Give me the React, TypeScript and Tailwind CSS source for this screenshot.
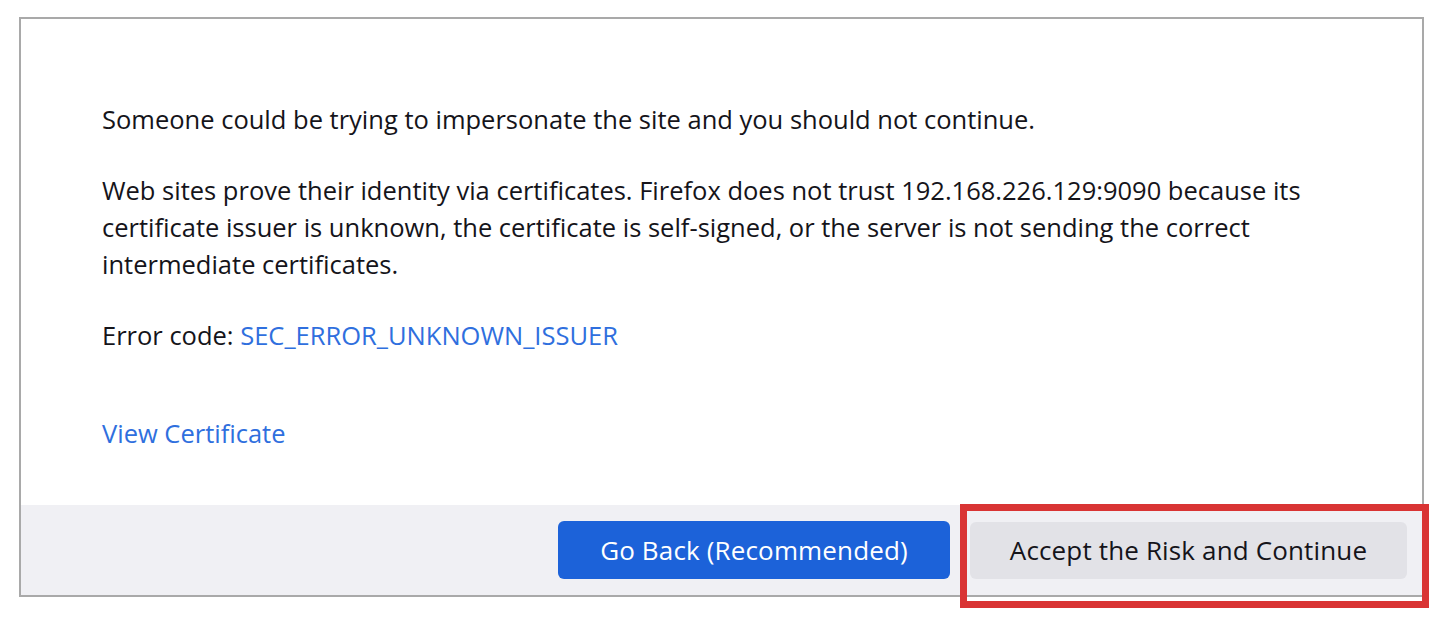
import React from 'react';

const App: React.FC = () => {
  return (
    <div className="w-[1446px] h-[618px] bg-white pt-[17px] pl-[19px] font-['Open_Sans',sans-serif] text-[#15141a]">
      <div className="w-[1405px] h-[580px] border-2 border-[#a9a9a9] flex flex-col">
        <div className="flex-1 pl-[81px] pt-[82px] text-[25.5px] leading-[37px]">
          <p>Someone could be trying to impersonate the site and you should not continue.</p>
          <p className="mt-[34px]">
            Web sites prove their identity via certificates. Firefox does not trust 192.168.226.129:9090 because its
            <br />
            certificate issuer is unknown, the certificate is self-signed, or the server is not sending the correct
            <br />
            intermediate certificates.
          </p>
          <p className="mt-[34px]">
            Error code: <a className="text-[#2f6fde]">SEC_ERROR_UNKNOWN_ISSUER</a>
          </p>
          <p className="mt-[61px]">
            <a className="text-[#2f6fde]">View Certificate</a>
          </p>
        </div>
        <div className="h-[90px] bg-[#f0f0f4] flex items-center justify-end gap-[20px] pr-[15px]">
          <button className="w-[392px] h-[58px] rounded-[6px] bg-[#1c62d9] text-white text-[26px] tracking-[0.15px]">
            Go Back (Recommended)
          </button>
          <div className="relative">
            <button className="w-[437px] h-[57px] rounded-[6px] bg-[#e2e2e7] text-[#15141a] text-[26px] tracking-[0.15px]">
              Accept the Risk and Continue
            </button>
            <div className="absolute left-[-10px] top-[-18px] w-[469px] h-[104px] border-[7px] border-[#d93434]" />
          </div>
        </div>
      </div>
    </div>
  );
};

export default App;
